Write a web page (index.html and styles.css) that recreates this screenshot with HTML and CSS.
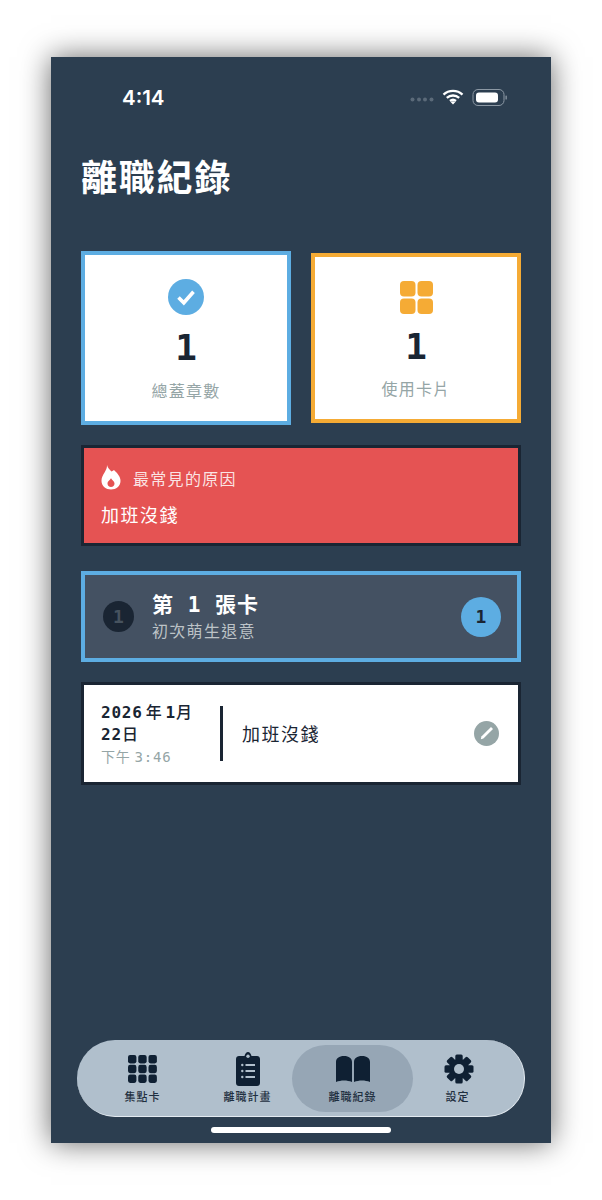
FILE: index.html
```html
<!DOCTYPE html>
<html lang="zh-Hant">
<head>
    <meta charset="UTF-8">
    <meta name="viewport" content="width=device-width, initial-scale=1.0">
    <title>離職紀錄</title>
    <link rel="stylesheet" href="styles.css">
</head>
<body>
    <div class="phone">
        <div class="status-bar">
            <div class="time">4:14</div>
            <div class="status-icons">
                <svg class="signal" width="24" height="5" viewBox="0 0 24 5"><circle cx="2.5" cy="2.5" r="2"/><circle cx="9" cy="2.5" r="2"/><circle cx="15" cy="2.5" r="2"/><circle cx="21.5" cy="2.5" r="2"/></svg>
                <svg class="wifi" width="22" height="16" viewBox="0 0 22 16"><path d="M1.5 5.6C6.8.6 15.2.6 20.5 5.6M4.8 8.9c3.5-3.2 8.9-3.2 12.4 0M8 12c1.700-1.400 4.300-1.400 6 0" fill="none" stroke="#fff" stroke-width="2.300"/><path d="M11 15.500 8.600 13c1.400-1 3.400-1 4.800 0z" fill="#fff"/></svg>
                <svg class="battery" width="35" height="17" viewBox="0 0 35 17"><rect x="1" y=".5" width="31" height="16" rx="5" fill="none" stroke="#8c98a4" stroke-width="1"/><rect x="4" y="3.500" width="22" height="10" rx="3" fill="#fff"/><rect x="33.500" y="6.500" width="1.300" height="4" rx=".6" fill="#8c98a4"/></svg>
            </div>
        </div>

        <h1 class="title">離職紀錄</h1>

        <div class="stats">
            <div class="stat stat-blue">
                <svg width="36" height="36" viewBox="0 0 36 36"><circle cx="18" cy="18" r="18" fill="#5dade2"/><path d="M10.500 18.500l5.300 5.300 9.700-11" fill="none" stroke="#fff" stroke-width="3.600"/></svg>
                <div class="stat-num">1</div>
                <div class="stat-label">總蓋章數</div>
            </div>
            <div class="stat stat-orange">
                <svg width="33" height="33" viewBox="0 0 33 33" fill="#f5ab35"><rect width="15.500" height="15.500" rx="4"/><rect x="17.500" width="15.500" height="15.500" rx="4"/><rect y="17.500" width="15.500" height="15.500" rx="4"/><rect x="17.500" y="17.500" width="15.500" height="15.500" rx="4"/></svg>
                <div class="stat-num">1</div>
                <div class="stat-label">使用卡片</div>
            </div>
        </div>

        <div class="reason">
            <div class="reason-head">
                <svg width="20" height="25" viewBox="0 0 20 25"><path fill-rule="evenodd" fill="#fff" d="M6 0C6.500 3 9 5 10.500 6.500 11.500 6 12.500 5.500 13 5 16 8 19.500 11.500 19.500 16 19.500 21 15 24.500 10 24.500 5 24.500.5 21 .5 16 .5 9 6.500 6 6 0zM10 13C10.500 15 13.500 16 13.500 18.500 13.500 20.500 12 22 10 22 8 22 6.500 20.500 6.500 18.500 6.500 16 9.500 15 10 13z"/></svg>
                <span>最常見的原因</span>
            </div>
            <div class="reason-text">加班沒錢</div>
        </div>

        <div class="card-row">
            <div class="card-no">1</div>
            <div class="card-info">
                <div class="card-name">第 1 張卡</div>
                <div class="card-sub">初次萌生退意</div>
            </div>
            <div class="card-count">1</div>
        </div>

        <div class="entry">
            <div class="entry-date">
                <div class="date">2026<span class="unit unit-gap">年</span>1<span class="unit">月</span><br>22<span class="unit">日</span></div>
                <div class="clock">下午<span class="clock-time">3:46</span></div>
            </div>
            <div class="entry-text">加班沒錢</div>
            <svg class="edit" width="25" height="25" viewBox="0 0 25 25"><circle cx="12.500" cy="12.500" r="12.500" fill="#95a5a6"/><path d="M6.800 18.200l.6-2.600L17 6l2 2-9.600 9.600z" fill="#fff"/></svg>
        </div>

        <div class="tabbar">
            <div class="tab">
                <svg width="29" height="28" viewBox="0 0 30 29" fill="#0f2033"><rect width="8.700" height="8.700" rx="2.200"/><rect x="10.600" width="8.700" height="8.700" rx="2.200"/><rect x="21.200" width="8.700" height="8.700" rx="2.200"/><rect y="10.100" width="8.700" height="8.700" rx="2.200"/><rect x="10.600" y="10.100" width="8.700" height="8.700" rx="2.200"/><rect x="21.200" y="10.100" width="8.700" height="8.700" rx="2.200"/><rect y="20.200" width="8.700" height="8.700" rx="2.200"/><rect x="10.600" y="20.200" width="8.700" height="8.700" rx="2.200"/><rect x="21.200" y="20.200" width="8.700" height="8.700" rx="2.200"/></svg>
                <span>集點卡</span>
            </div>
            <div class="tab">
                <svg width="24" height="34" viewBox="0 0 24 34"><path fill="#0f2033" d="M3 4h5.500C9 1.700 10.300 0 12 0s3 1.700 3.500 4H21c1.700 0 3 1.300 3 3v24c0 1.700-1.300 3-3 3H3c-1.700 0-3-1.300-3-3V7c0-1.700 1.300-3 3-3z"/><circle cx="12" cy="4.300" r="1.700" fill="#b0bfcc"/><g fill="#b0bfcc"><circle cx="6.300" cy="13" r="1.200"/><circle cx="6.300" cy="19" r="1.200"/><circle cx="6.300" cy="25" r="1.200"/><rect x="9.500" y="12" width="9.500" height="2"/><rect x="9.500" y="18" width="9.500" height="2"/><rect x="9.500" y="24" width="9.500" height="2"/></g></svg>
                <span>離職計畫</span>
            </div>
            <div class="tab tab-active">
                <svg width="34" height="26" viewBox="0 0 34 26" fill="#0f2033"><path d="M16 6C16 2.500 13 0 8 0 3 0 0 2.500 0 6V26C5 24 11 24 16 26z"/><path d="M18 6C18 2.500 21 0 26 0 31 0 34 2.500 34 6V26C29 24 23 24 18 26z"/></svg>
                <span>離職紀錄</span>
            </div>
            <div class="tab">
                <svg class="gear" width="30" height="30" viewBox="0 0 30 30"><g fill="#0f2033"><rect x="11.300" y=".5" width="7.400" height="29" rx="1.500"/><rect x="11.300" y=".5" width="7.400" height="29" rx="1.500" transform="rotate(45 15 15)"/><rect x="11.300" y=".5" width="7.400" height="29" rx="1.500" transform="rotate(90 15 15)"/><rect x="11.300" y=".5" width="7.400" height="29" rx="1.500" transform="rotate(135 15 15)"/><circle cx="15" cy="15" r="10"/></g><circle cx="15" cy="15" r="5" fill="#b0bfcc"/></svg>
                <span>設定</span>
            </div>
        </div>
        <div class="home-bar"></div>
    </div>
</body>
</html>
```

FILE: styles.css
```css
body {
    margin: 0;
    background-color: #fff;
    font-family: 'Noto Sans CJK TC', sans-serif;
    overflow: hidden;
}
.phone {
    width: 500px;
    height: 1086px;
    margin: 57px auto;
    padding: 0 30px;
    box-sizing: border-box;
    display: flex;
    flex-direction: column;
    background-color: #2c3e50;
    box-shadow: 0 0 28px rgba(0, 0, 0, 0.6);
    color: #fff;
}
.status-bar {
    display: flex;
    justify-content: space-between;
    align-items: center;
    height: 28px;
    margin-top: 26px;
    padding: 0 14px 0 41px;
}
.time {
    font-family: 'Inter', sans-serif;
    font-size: 20.5px;
    font-weight: 600;
}
.status-icons {
    display: flex;
    align-items: center;
    gap: 8px;
}
.status-icons svg {
    display: block;
}
.signal {
    fill: #5b6a79;
    margin-top: 4px;
}
.title {
    margin: 38px 0 0;
    font-size: 36px;
    line-height: 52px;
    font-weight: 700;
    letter-spacing: 1.8px;
}
.stats {
    display: grid;
    grid-template-columns: 210px 210px;
    gap: 20px;
    align-items: center;
    margin-top: 50px;
}
.stat {
    display: flex;
    flex-direction: column;
    align-items: center;
    box-sizing: border-box;
    background-color: #fff;
    border: 4px solid;
}
.stat-blue {
    height: 174px;
    padding-top: 24px;
    border-color: #5dade2;
}
.stat-orange {
    height: 170px;
    padding-top: 24px;
    border-color: #f5ab35;
}
.stat-num {
    margin-top: 11px;
    font-family: 'DejaVu Sans Mono', monospace;
    font-size: 36px;
    line-height: 44px;
    font-weight: 700;
    color: #1a2533;
}
.stat-label {
    margin-top: 7px;
    font-size: 16px;
    line-height: 24px;
    letter-spacing: 1.3px;
    color: #95a5a6;
}
.stat-blue .stat-label {
    margin-top: 8px;
}
.reason {
    box-sizing: border-box;
    height: 101px;
    margin-top: 20px;
    padding: 17px;
    background-color: #e55353;
    border: 3px solid #1a2533;
}
.reason-head {
    display: flex;
    align-items: center;
    gap: 12px;
    font-size: 16px;
    line-height: 24px;
    letter-spacing: 1.3px;
    color: rgba(255, 255, 255, 0.85);
}
.reason-text {
    margin-top: 11px;
    font-size: 18px;
    line-height: 26px;
    letter-spacing: 1.5px;
}
.card-row {
    display: flex;
    align-items: center;
    box-sizing: border-box;
    height: 91px;
    margin-top: 25px;
    padding: 0 16px 0 18px;
    background-color: #445162;
    border: 4px solid #5dade2;
}
.card-no {
    width: 31px;
    height: 31px;
    border-radius: 50%;
    background-color: #1a2533;
    color: #47535f;
    font-family: 'DejaVu Sans Mono', monospace;
    font-size: 18px;
    font-weight: 700;
    line-height: 31px;
    text-align: center;
}
.card-info {
    flex: 1;
    margin: -2px 0 0 18px;
}
.card-name {
    font-family: 'DejaVu Sans Mono', 'Noto Sans CJK TC', monospace;
    font-size: 21px;
    line-height: 28px;
    font-weight: 700;
    letter-spacing: 1px;
}
.card-sub {
    font-size: 16px;
    line-height: 22px;
    letter-spacing: 1.3px;
    color: #bdc3c7;
}
.card-count {
    width: 40px;
    height: 40px;
    border-radius: 50%;
    background-color: #5dade2;
    color: #1a2533;
    font-family: 'DejaVu Sans Mono', monospace;
    font-size: 18px;
    font-weight: 700;
    line-height: 40px;
    text-align: center;
}
.entry {
    display: flex;
    align-items: center;
    box-sizing: border-box;
    height: 103px;
    margin-top: 20px;
    padding: 0 19px 0 17px;
    background-color: #fff;
    border: 3px solid #1a2533;
    color: #1a2533;
}
.entry-date {
    box-sizing: border-box;
    width: 122px;
    height: 55px;
    border-right: 3px solid #1a2533;
    font-family: 'DejaVu Sans Mono', 'Noto Sans CJK TC', monospace;
}
.date {
    margin-top: -5px;
    font-size: 16px;
    line-height: 21px;
    font-weight: 700;
    letter-spacing: 0.8px;
}
.unit {
    font-family: 'Noto Sans CJK TC', sans-serif;
    font-weight: 500;
}
.unit-gap {
    margin: 0 3px;
}
.clock {
    margin-top: 2px;
    font-size: 14px;
    line-height: 20px;
    letter-spacing: 0.8px;
    color: #95a5a6;
}
.clock-time {
    margin-left: 4px;
}
.entry-text {
    flex: 1;
    margin: -2px 0 0 19px;
    font-size: 18px;
    letter-spacing: 1.5px;
}
.tabbar {
    display: grid;
    grid-template-columns: repeat(4, 105px);
    box-sizing: border-box;
    height: 77px;
    margin: auto -4px 0;
    padding: 5px 13px 4px;
    background-color: #b0bfcc;
    border-radius: 38px;
    border-bottom: 1px solid #e4ebf1;
    border-right: 1px solid #e4ebf1;
}
.tab {
    display: grid;
    grid-template-rows: 34px 16px;
    justify-items: center;
    align-items: center;
    row-gap: 2px;
    padding-top: 7px;
    color: #1f2f40;
    font-size: 11px;
    font-weight: 500;
    letter-spacing: 1px;
    line-height: 16px;
}
.tab-active {
    margin: 0 -8px;
    background-color: #96a6b5;
    border-radius: 34px;
}
.gear {
    margin-left: 2px;
}
.home-bar {
    width: 180px;
    height: 6px;
    margin: 10px auto;
    border-radius: 3px;
    background-color: #fff;
}
```
